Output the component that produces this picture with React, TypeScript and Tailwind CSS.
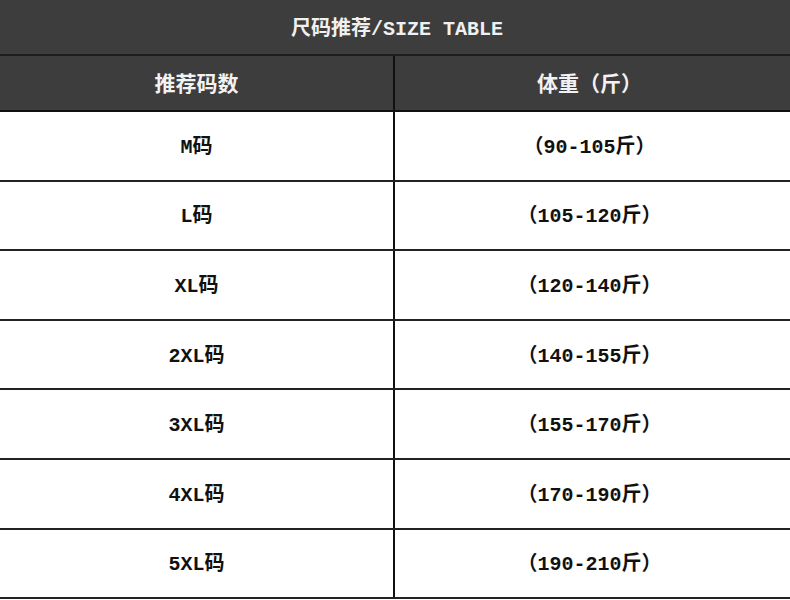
const rows = [
  { size: 'M码', weight: '（90-105斤）' },
  { size: 'L码', weight: '（105-120斤）' },
  { size: 'XL码', weight: '（120-140斤）' },
  { size: '2XL码', weight: '（140-155斤）' },
  { size: '3XL码', weight: '（155-170斤）' },
  { size: '4XL码', weight: '（170-190斤）' },
  { size: '5XL码', weight: '（190-210斤）' },
];

const font = { fontFamily: '"Liberation Mono", "Noto Sans CJK SC", monospace' };

function App() {
  return (
    <div className="w-[790px] h-[600px] bg-white overflow-hidden" style={font}>
      {/* Title */}
      <div className="h-[56px] bg-[#3d3d3d] border-b-2 border-[#1e1e1e] flex items-center justify-center pt-[6px] pl-[4px] text-[20px] font-semibold text-[#f0f0f0]">
        尺码推荐/SIZE TABLE
      </div>

      {/* Column headers */}
      <div className="h-[56px] bg-[#3d3d3d] border-b-2 border-[#111] grid grid-cols-[395px_1fr] text-[21px] font-bold text-[#f2f2f2]">
        <div className="flex items-center justify-center pt-[6px] border-r-2 border-[#111]">推荐码数</div>
        <div className="flex items-center justify-center pt-[6px] pr-[6px]">体重（斤）</div>
      </div>

      {/* Rows */}
      {rows.map((row) => (
        <div
          key={row.size}
          className="h-[69.6px] border-b-2 border-[#222] grid grid-cols-[395px_1fr] text-[20px] font-bold text-[#111]"
        >
          <div className="flex items-center justify-center pt-[4px] border-r-2 border-[#111]">{row.size}</div>
          <div className="flex items-center justify-center pt-[4px] pr-[6px]">{row.weight}</div>
        </div>
      ))}
    </div>
  );
}

export default App;
